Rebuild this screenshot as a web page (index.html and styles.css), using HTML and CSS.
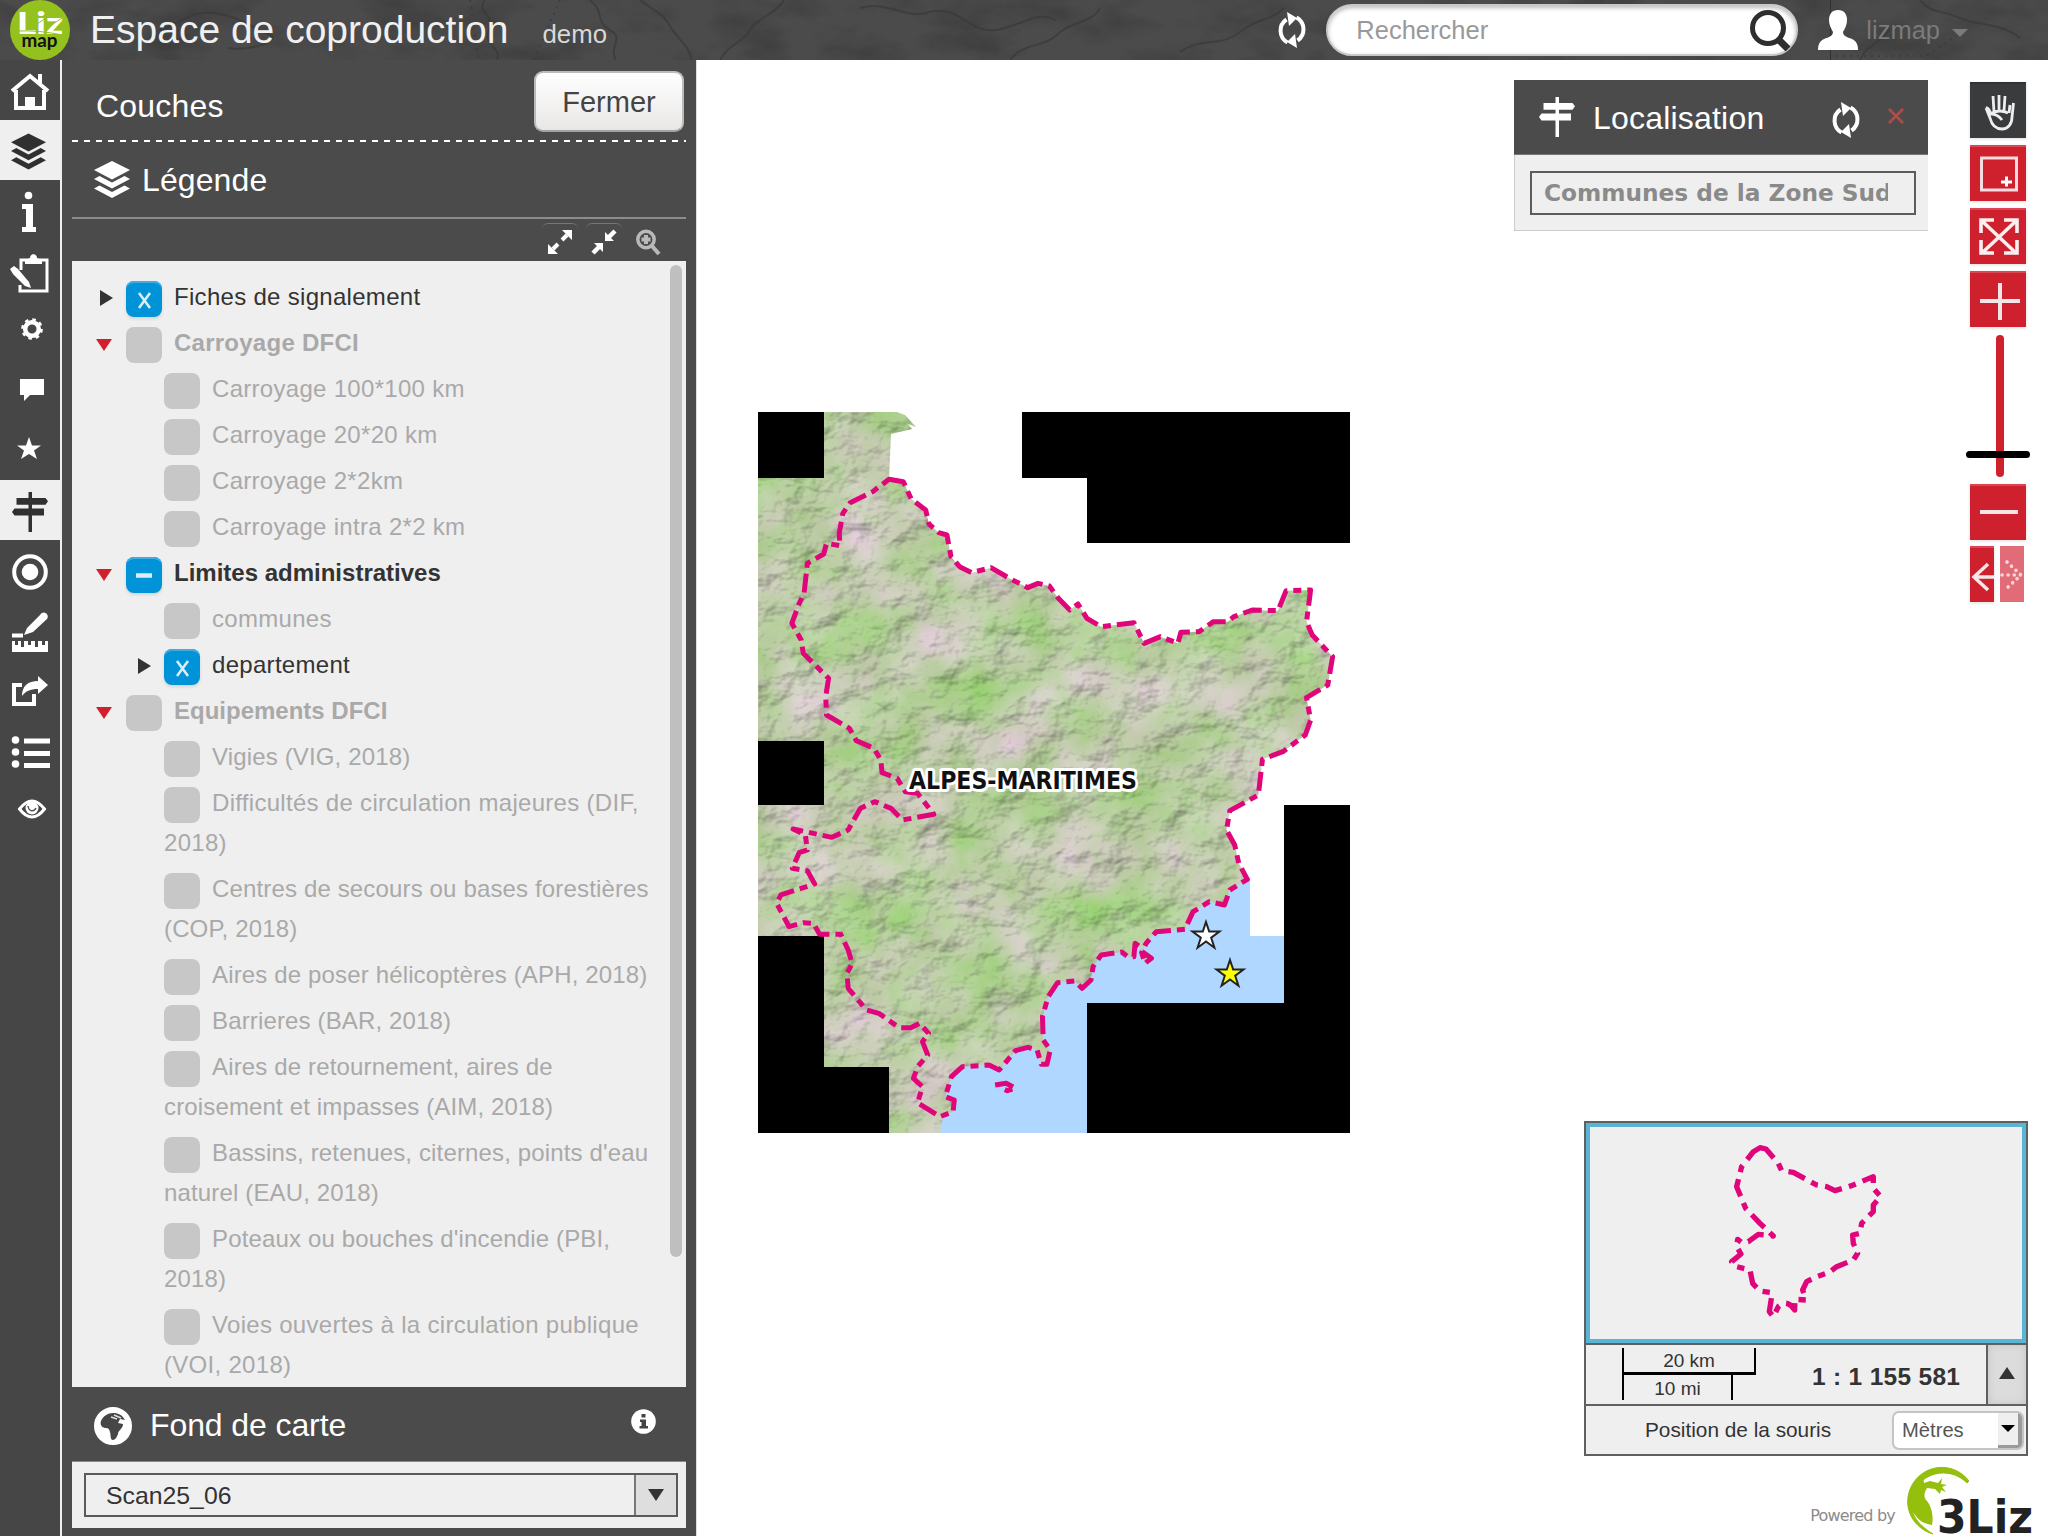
FILE: index.html
```html
<!DOCTYPE html>
<html lang="fr">
<head>
<meta charset="utf-8">
<title>Espace de coproduction</title>
<link rel="stylesheet" href="styles.css">
</head>
<body>
<svg class="defs" width="0" height="0" aria-hidden="true">
  <defs>
    <symbol id="layers" viewBox="0 0 36 37"><path d="M18 0 36 9 18 18.500 0 9Z"/><path d="M0 18l5.500-3L18 21.500 30.500 15 36 18 18 27.500Z"/><path d="M0 27.500l5.500-3L18 31 30.500 24.500 36 27.500 18 37Z"/></symbol>
    <symbol id="signpost" viewBox="0 0 36 40"><path d="M16.500 0h3.500v40h-3.500z"/><path d="M4.500 6H33.500l2.500 3.300-2.500 3.500H4.500zM32 16.500H2.500L0 20l2.500 3.500H32z"/></symbol>
    <symbol id="refresh" viewBox="0 0 30 36"><path d="M10.500 30.500A13.500 13.500 0 0 1 9.500 7.500M19.500 5.500A13.500 13.500 0 0 1 20.500 28.500" fill="none" stroke="currentColor" stroke-width="4"/><path d="M10 0l10 6L12 14zM20 36l-10-6L18 22z"/></symbol>
  </defs>
</svg>

<header class="topbar">
  <svg class="texture" viewBox="0 0 2048 60" width="2048" height="60">
    <defs>
      <filter id="stain" x="0" y="0" width="100%" height="100%"><feTurbulence type="fractalNoise" baseFrequency=".014 .03" numOctaves="5" seed="12"/><feColorMatrix values="0 0 0 0 0  0 0 0 0 0  0 0 0 0 0  2 0 0 0 -.9"/></filter>
    </defs>
    <rect width="2048" height="60" filter="url(#stain)" opacity=".2"/>
    <g fill="none" stroke="#393939" stroke-width="2" opacity=".7">
      <path d="M485 0c-10 12 12 16 4 30s14 18 8 30M590 0c15 12 5 22 20 30s-2 18 6 30M640 0c12 10 22 12 30 26s18 18 22 34M720 60c8-16 22-16 30-30s22-12 34-30M860 8c30-8 42 12 70 4s40 22 66 18 40-20 60-10M1010 60c14-18 34-12 48-26s34-10 42-26M1180 52c24-16 40-4 60-20s30-10 44-24"/>
      <path d="M160 30c20-6 32-22 60-16s30 14 48 20-20 18-40 14M1920 0c10 14 24 10 40 18s40 4 60 20M1860 60c8-18 20-14 30-32"/>
      <path d="M470 0l8 60M560 0l-26 60M1836 56h90l30-20" stroke-dasharray="2 5"/>
    </g>
    <path d="M1830.500 0v60" stroke="#303030"/>
  </svg>
  <svg class="brand" viewBox="0 0 60 60" width="60" height="60"><circle cx="30" cy="30" r="30" fill="#95c11f"/><text x="7" y="34" class="brand-liz" textLength="46" lengthAdjust="spacingAndGlyphs">Liz</text><path d="M8 31q20-1 45 4M24 26l12-8M40 26l12-8" fill="none" stroke="#95c11f" stroke-width="1"/><text x="11.500" y="46.500" class="brand-map" textLength="36" lengthAdjust="spacingAndGlyphs">map</text></svg>
  <h1 class="title">Espace de coproduction</h1>
  <span class="subtitle">demo</span>
  <div class="tools">
    <svg class="icon-refresh" width="30" height="36"><use href="#refresh"/></svg>
    <div class="search"><span>Rechercher</span><svg width="42" height="42" viewBox="0 0 42 42"><circle cx="18" cy="19" r="15.500" fill="none" stroke="#2e2e2e" stroke-width="5"/><path d="M29 31l9 9" stroke="#2e2e2e" stroke-width="7"/></svg></div>
    <svg class="user" width="40" height="40" viewBox="0 0 40 40"><path d="M20 0c6 0 9 4 9 10 0 5-2 8-4 12 0 4 4 5 9 7 4 2 6 5 6 11H0c0-6 2-9 6-11 5-2 9-3 9-7-2-4-4-7-4-12C11 4 14 0 20 0Z"/></svg>
    <span class="user-name">lizmap</span><i class="caret"></i>
  </div>
</header>

<main class="app">
  <nav class="dock">
    <a><svg viewBox="0 60 60 60"><path d="M12 91l18-15 18 15M16 90v18h28V90M40 75v8" fill="none" stroke="#fff" stroke-width="4"/><path d="M25 97h10v13H25zM38 74h4v9l-4-3z"/></svg></a>
    <a class="on"><svg viewBox="0 0 60 60"><use href="#layers" x="11" y="13" width="35" height="37"/></svg></a>
    <a><svg viewBox="0 180 60 60"><circle cx="28.500" cy="195.500" r="3.800"/><path d="M22 204h11v23h3v5H22v-5h4v-18h-4z"/></svg></a>
    <a><svg viewBox="0 240 60 60"><path d="M21 270v-10h26v31H20v-6" fill="none" stroke="#fff" stroke-width="3"/><path d="M25 264v-4l5-2c0-5 7-5 7 0l5 2v4zM10 269l4-3 4 3 11 13 2 6-6-2-12-12z"/></svg></a>
    <a><svg viewBox="0 300 60 60"><circle cx="32" cy="329" r="6.800" fill="none" stroke="#fff" stroke-width="4.500"/><circle cx="32" cy="329" r="9.600" fill="none" stroke="#fff" stroke-width="2.500" stroke-dasharray="3.540 4"/></svg></a>
    <a><svg viewBox="0 360 60 60"><path d="M20 379h24v16H30l-6 6v-6h-4z"/></svg></a>
    <a><svg viewBox="0 420 60 60"><path d="M29 437l3 8.500h9l-7 5 3 8.500-8-5-8 5 3-8.500-7-5h9z"/></svg></a>
    <a class="on"><svg viewBox="0 0 60 60"><use href="#signpost" x="12" y="12" width="36" height="40"/></svg></a>
    <a><svg viewBox="0 540 60 60"><circle cx="30" cy="572" r="15.800" fill="none" stroke="#fff" stroke-width="4"/><circle cx="30" cy="572" r="8.300"/></svg></a>
    <a><svg viewBox="0 600 60 60"><path d="M12 633.500h11v4H12zM24 635l3-7 13-13c4-6 10 0 7 4l-14 13zM12 641h3v4h3v-4h3v6h3v-6h4v4h3v-4h4v6h3v-6h4v4h3v-4h3v11H12z"/></svg></a>
    <a><svg viewBox="0 660 60 60"><path d="M22 685h-8v19h20v-10" fill="none" stroke="#fff" stroke-width="4"/><path d="M38 676l10 9-10 9v-5c-8 0-12 2-16 7 0-10 6-15 16-15z"/></svg></a>
    <a><svg viewBox="0 720 60 60"><circle cx="15.500" cy="740" r="3.800"/><circle cx="15.500" cy="752" r="3.800"/><circle cx="15.500" cy="764" r="3.800"/><path d="M24 738.500h26v5H24zM24 751h26v5H24zM24 763h26v5H24z"/></svg></a>
    <a><svg viewBox="0 780 60 60"><path d="M19.500 809q12.500-16 25 0-12.500 16-25 0z" fill="none" stroke="#fff" stroke-width="3"/><circle cx="32" cy="808" r="6.500"/><path d="M28 806c1 6 6 6 8 2" fill="none" stroke="#555" stroke-width="1.500"/></svg></a>
  </nav>

  <section class="panel">
    <div class="panel-head"><h2>Couches</h2><button class="close">Fermer</button></div>
    <div class="legend-head"><svg width="36" height="37"><use href="#layers"/></svg><h2>Légende</h2></div>
    <div class="legend-tools">
      <span class="tool"><svg width="26" height="26" viewBox="0 0 26 26"><path d="M15 11l5-5M11 15l-5 5" stroke="#fff" stroke-width="4"/><path d="M15 1h10v10zM1 15v10h10z"/></svg></span>
      <span class="tool"><svg width="26" height="26" viewBox="0 0 26 26"><path d="M18 8l6-6M8 18l-6 6" stroke="#fff" stroke-width="4.500"/><path d="M14 3v9h9zM3 14h9v9z"/></svg></span>
      <span class="tool plain"><svg width="26" height="26" viewBox="0 0 26 26"><circle cx="11" cy="10.500" r="8.200" fill="none" stroke="#b9b9b9" stroke-width="3.500"/><path d="M17 17l7 8" stroke="#b9b9b9" stroke-width="4"/><path d="M11 6v9M6.500 10.500h9" stroke="#b9b9b9" stroke-width="4"/></svg></span>
    </div>
    <div class="tree-box">
      <ul class="tree">
        <li class="active"><i class="closed"></i><p><b class="box on"><svg viewBox="0 0 36 36"><path d="M13 12l11 15M24 12L13 27"/></svg></b>Fiches de signalement</p></li>
        <li class="group wide"><i class="open"></i><p><b class="box"></b>Carroyage DFCI</p></li>
        <li class="child"><i></i><p><b class="box"></b>Carroyage 100*100 km</p></li>
        <li class="child"><i></i><p><b class="box"></b>Carroyage 20*20 km</p></li>
        <li class="child"><i></i><p><b class="box"></b>Carroyage 2*2km</p></li>
        <li class="child"><i></i><p><b class="box"></b>Carroyage intra 2*2 km</p></li>
        <li class="group active"><i class="open"></i><p><b class="box on"><svg viewBox="0 0 36 36"><path d="M10 18.500h16" stroke-width="4.500"/></svg></b>Limites administratives</p></li>
        <li class="child"><i></i><p><b class="box"></b>communes</p></li>
        <li class="child active"><i class="closed"></i><p><b class="box on"><svg viewBox="0 0 36 36"><path d="M13 12l11 15M24 12L13 27"/></svg></b>departement</p></li>
        <li class="group"><i class="open"></i><p><b class="box"></b>Equipements DFCI</p></li>
        <li class="child tight"><i></i><p><b class="box"></b>Vigies (VIG, 2018)</p></li>
        <li class="child"><i></i><p><b class="box"></b>Difficultés de circulation majeures (DIF,<br>2018)</p></li>
        <li class="child tight"><i></i><p><b class="box"></b>Centres de secours ou bases forestières<br>(COP, 2018)</p></li>
        <li class="child tight"><i></i><p><b class="box"></b>Aires de poser hélicoptères (APH, 2018)</p></li>
        <li class="child tight"><i></i><p><b class="box"></b>Barrieres (BAR, 2018)</p></li>
        <li class="child tight"><i></i><p><b class="box"></b>Aires de retournement, aires de<br>croisement et impasses (AIM, 2018)</p></li>
        <li class="child tight"><i></i><p><b class="box"></b>Bassins, retenues, citernes, points d'eau<br>naturel (EAU, 2018)</p></li>
        <li class="child tight"><i></i><p><b class="box"></b>Poteaux ou bouches d'incendie (PBI,<br>2018)</p></li>
        <li class="child"><i></i><p><b class="box"></b>Voies ouvertes à la circulation publique<br>(VOI, 2018)</p></li>
      </ul>
      <span class="scroll-thumb"></span>
    </div>
    <div class="base-head">
      <svg width="38" height="38" viewBox="0 0 38 38"><circle cx="19" cy="19" r="17" fill="#fff" stroke="#fff" stroke-width="4"/><path d="M7 14c2-5 7-8 12-8 6 0 9 2 12 7l-5-1-2 4 5 1c0 5-5 6-5 10-1 3-3 6-5 6-3 0-2-5-3-8s-1-4-5-4c-4-1-5-4-4-7z" fill="#464646"/><path d="M17 10l6 2M20 8l7 3" stroke="#ddd" stroke-width="1.500"/></svg>
      <h2>Fond de carte</h2>
      <svg class="info" width="25" height="25" viewBox="0 0 25 25"><circle cx="12.500" cy="12.500" r="12.300" fill="#fff"/><path d="M10.500 5h4v3.500h-4zM9 10.500h6V17h2v2.500H8.500V17h2v-4H9z" fill="#444"/></svg>
    </div>
    <div class="base-body"><div class="base-select"><span>Scan25_06</span><em><i></i></em></div></div>
  </section>

  <section class="map">
    <svg class="map-image" viewBox="740 400 640 750" width="640" height="750">
      <defs>
        <filter id="terrain" x="0" y="0" width="100%" height="100%" color-interpolation-filters="sRGB">
          <feTurbulence type="fractalNoise" baseFrequency=".018" numOctaves="6" seed="8" result="n"/>
          <feColorMatrix in="n" values=".36 0 0 0 .57  0 .1 0 0 .765  .5 0 0 0 .41  0 0 0 0 1" result="cover"/>
          <feTurbulence type="fractalNoise" baseFrequency=".026 .036" numOctaves="4" seed="3"/>
          <feDiffuseLighting surfaceScale="3.600" diffuseConstant="1.140" lighting-color="#fff" result="light"><feDistantLight azimuth="225" elevation="60"/></feDiffuseLighting>
          <feBlend in="cover" in2="light" mode="multiply"/>
        </filter>
        <path id="limit" class="limit" d="M365 238 400 245 420 298 455 330 463 372 487 398 507 405 517 470 538 500 568 518 615 503 660 535 705 563 730 550 758 558 780 595 808 630 828 612 850 655 885 680 965 668 990 730 1030 710 1073 730 1080 697 1125 695 1160 665 1195 665 1210 650 1255 630 1318 632 1338 572 1398 570 1388 665 1402 705 1452 770 1440 855 1388 893 1398 960 1385 1005 1330 1055 1280 1078 1270 1185 1200 1232 1192 1290 1212 1335 1222 1390 1243 1438 1200 1470 1187 1515 1150 1505 1110 1535 1090 1588 1020 1595 995 1630 985 1655 1008 1675 992 1690 980 1640 968 1630 965 1670 950 1670 935 1656 885 1665 865 1700 860 1740 838 1765 820 1743 778 1748 755 1790 741 1850 743 1920 760 1950 752 1993 738 1993 728 1950 705 1942 675 1952 635 2010 610 1995 545 2000 518 2030 503 2090 525 2100 522 2135 490 2150 435 2108 447 2060 425 2035 435 2000 460 1965 447 1925 462 1900 440 1870 418 1883 390 1883 340 1840 310 1830 265 1765 262 1720 275 1690 265 1650 247 1603 195 1603 180 1570 155 1568 120 1580 90 1510 100 1485 183 1452 165 1412 128 1405 145 1358 165 1350 160 1305 130 1287 225 1312 265 1290 295 1225 330 1205 370 1225 398 1260 475 1243 435 1180 405 1175 385 1135 348 1118 345 1080 328 1045 285 1022 268 985 212 945 210 890 217 835 155 760 150 720 127 670 145 610 157 580 165 490 205 462 212 430 245 437 243 400 252 340 270 308 325 275Z"/>
        <clipPath id="land"><use href="#limit" transform="translate(740 400) scale(.40816 .33333)"/><path d="M824 412H897L905 415 916 427 908 424 912 429 891 434 889 480 940 560 960 700 1000 800 960 900 935 1050V1110L943 1117 940 1133H889V1067H824V936H758V805H824V741H758V478H824Z"/></clipPath>
      </defs>
      <path fill="#b0d7ff" d="M1250 878v58h34v67h-197v130H920l20-100 100-60 130-60z"/>
      <path fill="#000" d="M758 412h66v66h-66zM1022 412h328v131h-263v-65h-65zM758 741h66v64h-66zM758 936h66v131h65v66H758zM1284 805h66v328h-263v-130h197z"/>
      <g clip-path="url(#land)"><rect x="758" y="412" width="592" height="721" filter="url(#terrain)"/></g>
      <g transform="translate(740 400) scale(.40816 .33333)">
        <use href="#limit"/><path class="limit" d="M625 2055 652 2050 675 2065 655 2072 635 2062"/>
      </g>
      <text x="909" y="789" class="place" textLength="228" lengthAdjust="spacingAndGlyphs">ALPES-MARITIMES</text>
      <g stroke="#222" stroke-width="2" stroke-linejoin="miter"><path fill="#fff" d="M1206 922l3.200 9.500h10.300l-8.300 6.200 3.200 10-8.400-6.200-8.400 6.200 3.200-10-8.300-6.200h10.300z"/><path fill="#ff0" d="M1230 960l3.200 9.500h10.300l-8.300 6.200 3.200 10-8.400-6.200-8.400 6.200 3.200-10-8.300-6.200h10.300z"/></g>
    </svg>

    <aside class="locate">
      <div class="locate-head"><svg width="36" height="40"><use href="#signpost"/></svg><h2>Localisation</h2><svg class="reset" width="30" height="36"><use href="#refresh"/></svg><svg class="x" width="18" height="18" viewBox="0 0 18 18"><path d="M2 2l14 14M16 2L2 16" stroke="#b34b48" stroke-width="2.600"/></svg></div>
      <div class="locate-body"><div class="field"><span>Communes de la Zone Sud</span></div></div>
    </aside>

    <div class="navbar">
      <a class="dark"><svg viewBox="0 0 56 52"><path d="M16 24l4 10c2 8 6 11 12 11s10-5 10-12l1.500-14M16 24c3-1 4 5 5 6 5 0 8 2 11 6M24 28l-1-16M29 26V11M34 27l1-15M39 29l1-8M22 29q8-4 16 0" fill="none" stroke="#eee" stroke-width="2.800"/></svg></a>
      <a><svg viewBox="0 0 56 52"><path d="M11.500 11h35v32h-35z" fill="none" stroke="#f6dcdf" stroke-width="3"/><path d="M31 35h11M36.500 29.500v10" stroke="#fff" stroke-width="3"/></svg></a>
      <a><svg viewBox="0 0 56 52"><path d="M12 11l34 32M46 11L12 43M24 10H11v13M34 10h13v13M11 30v13h13M47 30v13H34" fill="none" stroke="#fbeff0" stroke-width="3.600"/></svg></a>
      <a><svg viewBox="0 0 56 52"><path d="M10 28h40M30 10v37" stroke="#f6e6e8" stroke-width="4"/></svg></a>
      <div class="slider"><i></i></div>
      <a><svg viewBox="0 0 56 52"><path d="M10 26h38" stroke="#f6e6e8" stroke-width="4"/></svg></a>
      <div class="history"><a><svg viewBox="0 0 24 52"><path d="M24 29H4M18 16L4 29l14 13" fill="none" stroke="#f6e6e8" stroke-width="3.500"/></svg></a><a class="off"><svg viewBox="0 0 24 52"><path d="M2 27h19M7 14l14 13L7 40" fill="none" stroke="#f8d5d9" stroke-width="3.600" stroke-dasharray=".1 6" stroke-linecap="round"/></svg></a></div>
    </div>

    <aside class="overview">
      <div class="mini"><svg width="432" height="212" viewBox="0 0 432 212"><path transform="translate(-30 -27) scale(.3333)" d="M600 143 618 147 655 190 665 212 700 217 770 255 800 260 825 272 875 257 940 230 940 265 962 290 940 315 940 335 905 370 900 400 878 405 880 430 893 460 880 480 830 500 808 517 770 530 740 545 728 570 738 600 705 598 704 630 Q680 595 655 620 L640 650 628 635 635 590 635 578 600 573 578 550 570 510 530 500 515 485 543 462 530 440 533 418 545 428 565 425 595 403 640 408 600 370 557 325 530 260 545 200 580 155Z"/></svg></div>
      <div class="scale-row"><div class="scale"><span class="km">20 km</span><span class="mi">10 mi</span></div><strong>1 : 1 155 581</strong><em><i></i></em></div>
      <div class="mouse-row"><span>Position de la souris</span><div class="unit"><span>Mètres</span><em><i></i></em></div></div>
    </aside>

    <div class="powered">
      <span>Powered by</span>
      <svg width="128" height="72" viewBox="0 0 128 72"><path d="M62 16A34 34 0 0 0 4 22C-6 44 8 64 26 69 8 58 3 46 4 36L8 24A33 33 0 0 1 60 18Z" fill="#95bf0d" stroke="#95bf0d"/><path d="M16 10c-15 10-18 30-8 40 4 6 10 9 17 10 2-10-1-20-6-25-3-5-1-8 1-12l8 1 5 5 1-4 5 2-4-5 5-2-6-1 1-6-4 5-8-2-6 2z" fill="#95bf0d"/><text x="30" y="68" class="logo-text" textLength="96" lengthAdjust="spacingAndGlyphs">3Liz</text></svg>
    </div>
  </section>
</main>
</body>
</html>
```
FILE: styles.css
```css
* { box-sizing: border-box; margin: 0; padding: 0; }
body { width: 2048px; height: 1536px; overflow: hidden; background: #fff; font: 24px "Liberation Sans", Arial, sans-serif; color: #333; }
h1, h2 { font-weight: 400; font-size: 32px; color: #fff; white-space: nowrap; }
svg { display: block; flex: none; fill: #fff; color: #fff; }
.defs { position: absolute; }
em, i { font-style: normal; }

.topbar { position: relative; height: 60px; background: #4b4b4b; display: flex; align-items: center; padding-left: 10px; }
.topbar > * { position: relative; }
.topbar .texture { position: absolute; left: 0; top: 0; }
.brand-liz { font: 900 30px Lato, sans-serif; fill: #fff; }
.brand-map { font: 700 18px Lato, sans-serif; fill: #111; }
.title { font-size: 39px; color: #f0f0f0; margin-left: 20px; }
.subtitle { font-size: 25.800px; color: #d8d8d8; margin: 8px 0 0 34px; }
.topbar .tools { display: flex; align-items: center; margin-left: auto; padding-right: 80px; color: #7b7b7b; font-size: 25.500px; }
.search { width: 472px; height: 52px; margin-left: 19px; border: 2px solid #c8c8c8; border-radius: 26px; background: #fff; box-shadow: inset 0 2px 4px #bbb; display: flex; align-items: center; justify-content: space-between; padding: 0 4px 0 28px; color: #999; }
.user { margin-left: 20px; }
.user-name { margin-left: 8px; }
.caret { border: 8px solid transparent; border-top-color: #7b7b7b; border-bottom: 0; margin: 6px 0 0 12px; }

.app { display: flex; height: 1476px; }
.dock { width: 62px; background: #464646; border-right: 2px solid #efefef; flex: none; }
.dock a { display: block; height: 60px; }
.dock svg { width: 60px; height: 60px; }
.dock .on { background: #efefef; }
.dock .on svg { fill: #303030; }

.panel { width: 634px; flex: none; background: #4b4b4b; padding: 0 10px 8px; display: flex; flex-direction: column; }
.panel-head { height: 82px; display: flex; justify-content: space-between; padding: 11px 2px 0 24px; background: repeating-linear-gradient(90deg, #fff 0 6px, transparent 6px 12px) 0 100% / 100% 2px no-repeat; }
.panel-head h2 { margin-top: 17px; letter-spacing: .2px; }
.close { width: 150px; height: 61px; border: 2px solid #bbb; border-bottom-color: #a2a2a2; border-radius: 9px; background: linear-gradient(#fff, #e9e7e6); font: 29px "Liberation Sans", sans-serif; color: #444; padding-top: 2px; }
.legend-head { height: 77px; display: flex; align-items: center; gap: 12px; padding-left: 22px; border-bottom: 2px solid #8c8c8c; }
.legend-head h2 { margin-top: 2px; letter-spacing: .1px; }
.legend-tools { height: 42px; display: flex; justify-content: flex-end; gap: 8px; padding: 4px 20px 0; }
.tool { width: 36px; height: 36px; border-radius: 6px; border-top: 1px solid #777; display: grid; place-items: center; }
.tool.plain { border-color: transparent; }
.tree-box { position: relative; height: 1126px; background: #efefef; overflow: hidden; padding-top: 13px; flex: none; }
.tree { list-style: none; letter-spacing: .3px; }
.tree li { display: flex; padding: 3px 0 3px 22px; color: #a9a9a9; line-height: 40px; white-space: nowrap; }
.tree li.child { padding-left: 60px; }
.tree li.group { font-weight: 700; letter-spacing: 0; }
.tree li.wide { letter-spacing: .25px; }
.tree li.tight { letter-spacing: .15px; }
.tree li.active { color: #333; }
.tree li > i { width: 32px; flex: none; display: flex; align-items: flex-start; }
.closed::before { content: ""; margin: 13px 0 0 6px; border: 8px solid transparent; border-left: 13px solid #333; border-right: 0; }
.open::before { content: ""; margin: 16px 0 0 2px; border: 8px solid transparent; border-top: 12px solid #d0202e; border-bottom: 0; }
.box { display: inline-block; width: 36px; height: 36px; border-radius: 8px; background: #c7c7c7; vertical-align: -12px; margin-right: 12px; }
.box.on { background: #0093d8; box-shadow: inset 0 3px 0 -1px #3fade2, 0 2px 3px #d5d5d5; }
.box svg { stroke: #d9eefa; stroke-width: 2.600; }
.scroll-thumb { position: absolute; right: 4px; top: 4px; width: 12px; height: 992px; border-radius: 6px; background: #bfbfbf; }
.base-head { height: 75px; display: flex; align-items: center; padding: 3px 30px 0 22px; border-bottom: 1px solid #888; }
.base-head h2 { margin-left: 18px; letter-spacing: -.1px; }
.base-head .info { margin: 0 0 9px auto; }
.base-body { height: 66px; background: #efefef; padding: 11px 8px 11px 12px; }
.base-select { height: 44px; border: 2px solid #5a5a5a; display: flex; align-items: center; justify-content: space-between; padding-left: 20px; }
.base-select span { font-size: 24.800px; margin-top: 2px; }
.base-select em { width: 42px; height: 100%; background: #dedede; border-left: 2px solid #777; display: grid; place-items: center; }
.base-select em i { border: 8px solid transparent; border-top: 12px solid #333; border-bottom: 0; }

.map { position: relative; flex: 1; border-left: 1px solid #ddd; }
.map-image { position: absolute; left: 43px; top: 340px; }
.limit { fill: none; stroke: #e0057a; stroke-linejoin: round; vector-effect: non-scaling-stroke; stroke-width: 5px; stroke-dasharray: 19px 6px 8px 6px; }
.place { font: 700 24px "DejaVu Sans", sans-serif; fill: #111; stroke: #fff; stroke-width: 6px; stroke-linejoin: round; paint-order: stroke; }

.locate { position: absolute; right: 120px; top: 20px; width: 414px; }
.locate-head { height: 75px; background: #4b4b4b; display: flex; align-items: center; padding-left: 25px; border-bottom: 1px solid #777; }
.locate-head h2 { margin: 2px 0 0 18px; letter-spacing: .2px; }
.reset { margin: 6px 0 0 67px; }
.locate-head .x { margin: 0 0 3px 26px; }
.locate-body { height: 76px; background: #efefef; border: solid #ccc; border-width: 0 0 1px 1px; padding: 16px 12px 16px 15px; }
.field { height: 44px; border: 2px solid #5c5c5c; padding: 0 26px 0 12px; }
.field span { display: block; overflow: hidden; white-space: nowrap; font: 700 23.250px/40px "DejaVu Sans", sans-serif; color: #8a8a8a; }

.navbar { position: absolute; left: 1273px; top: 22px; width: 56px; display: flex; flex-direction: column; gap: 7px; }
.navbar a { display: block; height: 56px; background: #cf202e; border-top: 2px solid #dc4654; box-shadow: 0 1px 3px #ddd; overflow: hidden; }
.navbar a svg { margin-top: -2px; height: 56px; width: 100%; }
.navbar .dark { background: #393b3d; border-color: #303234; }
.slider { position: relative; width: 8px; height: 142px; margin: 1px 0 0 26px; background: #cf202e; border-radius: 4px; }
.slider i { position: absolute; left: -30px; top: 116px; width: 64px; height: 7px; border-radius: 4px; background: #000; }
.history { display: flex; gap: 6px; margin-top: -1px; }
.history a { width: 24px; }
.history .off { background: #e16c77; border-color: #e16c77; box-shadow: none; }

.overview { position: absolute; right: 20px; top: 1061px; width: 444px; height: 335px; border: 2px solid #606060; background: #efefef; font-size: 20px; }
.mini { height: 220px; border: 4px solid #5ab4d5; }
.mini path { fill: none; stroke: #e0057a; stroke-width: 16; stroke-linejoin: round; stroke-dasharray: 54 22 22 22; }
.scale-row { height: 63px; border: solid #606060; border-width: 2px 0; display: flex; }
.scale { width: 134px; margin: 3px 0 0 36px; font-size: 19px; text-align: center; }
.scale span { display: block; line-height: 26px; height: 27px; border: 2px solid #000; }
.scale .km { border-top: 0; border-bottom-width: 3px; }
.scale .mi { width: 111px; height: 25px; border-top: 0; border-bottom: 0; line-height: 28px; }
.scale-row strong { margin: 18px 0 0 56px; font-size: 24.500px; line-height: 28px; white-space: nowrap; letter-spacing: .3px; }
.scale-row em { width: 40px; margin-left: auto; background: #dcdcdc; border-left: 2px solid #606060; box-shadow: inset 0 0 8px #c4c4c4; display: grid; place-items: center; }
.scale-row em i { border: 8px solid transparent; border-bottom: 12px solid #333; border-top: 0; margin-bottom: 3px; }
.mouse-row { height: 48px; display: flex; align-items: center; justify-content: space-between; padding: 0 2px 0 59px; font-size: 20.800px; }
.unit { width: 132px; height: 39px; background: #fff; border: 2px solid #c4c4c4; border-radius: 7px; display: flex; align-items: center; justify-content: space-between; padding-left: 8px; font-size: 20.200px; color: #555; overflow: hidden; }
.unit em { width: 24px; height: 35px; background: #efefef; border: solid #9a9a9a; border-width: 0 4px 3px 0; display: grid; place-items: center; }
.unit i { border: 7px solid transparent; border-top: 7px solid #000; border-bottom: 0; }

.powered { position: absolute; right: 13px; top: 1405px; display: flex; }
.powered span { font: 16px "DejaVu Sans", sans-serif; color: #8b8b8b; letter-spacing: -.8px; margin: 41px 12px 0 0; }
.logo-text { font: 900 46px "DejaVu Sans", sans-serif; fill: #222; }
```
